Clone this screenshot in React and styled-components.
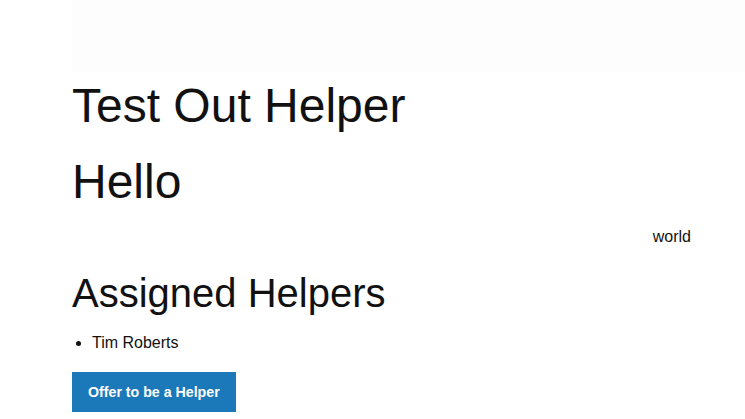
import styled, { createGlobalStyle } from 'styled-components';

const GlobalStyle = createGlobalStyle`
  body {
    margin: 0;
    background: #ffffff;
    font-family: 'Liberation Sans', Arial, sans-serif;
    color: #111111;
  }
`;

const TopBar = styled.div`
  height: 72px;
  margin-left: 72px;
  background-color: #fdfdfd;
`;

const Main = styled.main`
  display: flex;
  flex-direction: column;
  align-items: flex-start;
  padding: 6px 54px 0 72px;
`;

const Title = styled.h1`
  margin: ${({ $top }) => $top || 0}px 0 0;
  font-size: 48px;
  font-weight: normal;
`;

const SideNote = styled.div`
  align-self: stretch;
  text-align: right;
  margin: 19px 0 25px;
  font-size: 16px;
`;

const SubTitle = styled.h2`
  margin: 0 0 18px;
  font-size: 40px;
  font-weight: normal;
`;

const List = styled.ul`
  margin: 0 0 20px;
  padding-left: 20px;
  font-size: 16px;
`;

const Button = styled.button`
  height: 40px;
  padding: 0 16px;
  border: none;
  border-radius: 0;
  background-color: #1b79b9;
  color: #ffffff;
  font-family: 'Liberation Sans', Arial, sans-serif;
  font-size: 14.2px;
  font-weight: bold;
  cursor: pointer;
`;

export default function App() {
  return (
    <>
      <GlobalStyle />
      <TopBar />
      <Main>
        <Title>Test Out Helper</Title>
        <Title as='div' $top={21}>Hello</Title>
        <SideNote>world</SideNote>
        <SubTitle>Assigned Helpers</SubTitle>
        <List>
          <li>Tim Roberts</li>
        </List>
        <Button>Offer to be a Helper</Button>
      </Main>
    </>
  );
}
